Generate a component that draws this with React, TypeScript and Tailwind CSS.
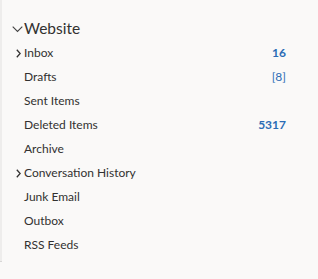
import React from "react";

const Chevron = ({ down }: { down?: boolean }) =>
  down ? (
    <svg width="11" height="7" viewBox="0 0 11 7" className="shrink-0">
      <path d="M0.7 0.7 L5.5 5.5 L10.3 0.7" fill="none" stroke="#424242" strokeWidth="1.1" />
    </svg>
  ) : (
    <svg width="5" height="9" viewBox="0 0 5 9" className="shrink-0">
      <path d="M0.8 0.8 L4.2 4.5 L0.8 8.2" fill="none" stroke="#323130" strokeWidth="1.3" />
    </svg>
  );

const items: { name: string; count?: string; bold?: boolean; expand?: boolean }[] = [
  { name: "Inbox", count: "16", bold: true, expand: true },
  { name: "Drafts", count: "[8]" },
  { name: "Sent Items" },
  { name: "Deleted Items", count: "5317", bold: true },
  { name: "Archive" },
  { name: "Conversation History", expand: true },
  { name: "Junk Email" },
  { name: "Outbox" },
  { name: "RSS Feeds" },
];

export default function App() {
  return (
    <div
      className="w-[318px] h-[279px] bg-[#faf9f8] flex text-[#323130]"
      style={{ fontFamily: 'Lato, "Open Sans", sans-serif' }}
    >
      <div className="w-[2px] h-[262px] bg-[#eeedec] border-b border-[#d8d7d6]" />
      <div className="flex-1 pt-[17px] pr-[32px]">
        <div className="h-6 flex items-center pl-[10px] gap-[1px]">
          <Chevron down />
          <span className="text-[15.5px] leading-none">Website</span>
        </div>
        {items.map((it) => (
          <div key={it.name} className="h-6 flex items-center">
            <div className="w-[22px] flex justify-end pr-[3px]">{it.expand && <Chevron />}</div>
            <span className="text-[12px] leading-none flex-1">{it.name}</span>
            {it.count && (
              <span
                className={`text-[12px] leading-none text-[#2b6cb5] ${it.bold ? "font-bold" : ""}`}
              >
                {it.count}
              </span>
            )}
          </div>
        ))}
      </div>
    </div>
  );
}
